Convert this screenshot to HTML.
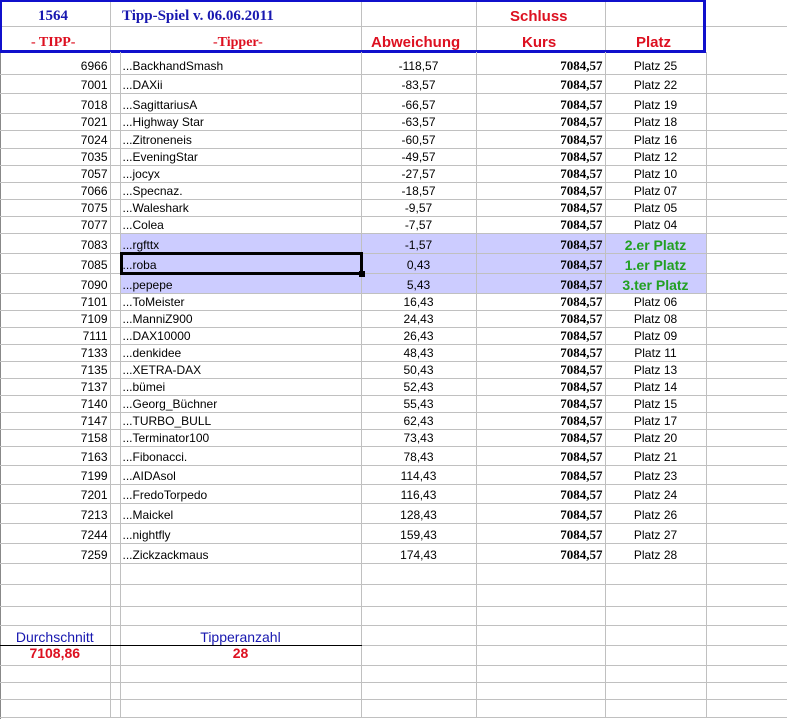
<!DOCTYPE html>
<html><head><meta charset="utf-8"><style>
*{margin:0;padding:0;box-sizing:border-box}
body{width:787px;height:719px;overflow:hidden;background:#fff;position:relative;font-family:"Liberation Sans",Arial,sans-serif;font-size:12px;color:#000}
table{position:absolute;left:0;top:52px;border-collapse:collapse;table-layout:fixed;width:788px}
td{border-right:1px solid #c0c0c0;border-bottom:1px solid #c0c0c0;padding:0 2px 1px 2px;vertical-align:bottom;white-space:nowrap;overflow:visible;line-height:14px}
td.a{text-align:right}
td.c{text-align:left}
td.d{text-align:center}
td.e{text-align:right;font-family:"Liberation Serif",serif;font-weight:bold;font-size:13px}
td.f{text-align:center}
tr.h td.c,tr.h td.d,tr.h td.e,tr.h td.g{background:#ccccff}
td.g{color:#22a022;font-weight:bold;font-size:14px;text-align:center}
.hdr{position:absolute;left:0;top:0;width:706px;height:53px;border:2px solid #1010cc;border-bottom:3px solid #1010cc;border-right:3px solid #1010cc}
.t{position:absolute;white-space:nowrap}
.vl{position:absolute;width:1px;background:#c0c0c0}
.hl{position:absolute;height:1px;background:#c0c0c0}
</style></head><body>
<div class="vl" style="left:0;top:0;height:719px;background:#888"></div>
<div class="vl" style="left:110px;top:0;height:52px"></div>
<div class="vl" style="left:361px;top:0;height:52px"></div>
<div class="vl" style="left:476px;top:0;height:52px"></div>
<div class="vl" style="left:605px;top:0;height:52px"></div>
<div class="hl" style="left:0;top:26px;width:706px"></div>
<div class="hl" style="left:706px;top:26px;width:81px"></div>
<div class="hdr"></div>
<div class="t" style="left:38px;top:8px;font-family:'Liberation Serif',serif;font-weight:bold;font-size:15px;color:#1818b0">1564</div>
<div class="t" style="left:122px;top:8px;font-family:'Liberation Serif',serif;font-weight:bold;font-size:15px;color:#1818b0">Tipp-Spiel v. 06.06.2011</div>
<div class="t" style="left:510px;top:8px;font-weight:bold;font-size:15px;color:#dd1020">Schluss</div>
<div class="t" style="left:31px;top:35px;font-family:'Liberation Serif',serif;font-weight:bold;font-size:14px;color:#dd1020">- TIPP-</div>
<div class="t" style="left:213px;top:35px;font-family:'Liberation Serif',serif;font-weight:bold;font-size:14px;color:#dd1020">-Tipper-</div>
<div class="t" style="left:371px;top:34px;font-weight:bold;font-size:15px;color:#dd1020">Abweichung</div>
<div class="t" style="left:522px;top:34px;font-weight:bold;font-size:15px;color:#dd1020">Kurs</div>
<div class="t" style="left:636px;top:34px;font-weight:bold;font-size:15px;color:#dd1020">Platz</div>
<table>
<colgroup><col style="width:110px"><col style="width:10px"><col style="width:241px"><col style="width:115px"><col style="width:129px"><col style="width:101px"><col style="width:82px"></colgroup>
<tr style="height:22px"><td class="a">6966</td><td></td><td class="c">...BackhandSmash</td><td class="d">-118,57</td><td class="e">7084,57</td><td class="f">Platz 25</td><td></td></tr>
<tr style="height:19px"><td class="a">7001</td><td></td><td class="c">...DAXii</td><td class="d">-83,57</td><td class="e">7084,57</td><td class="f">Platz 22</td><td></td></tr>
<tr style="height:20px"><td class="a">7018</td><td></td><td class="c">...SagittariusA</td><td class="d">-66,57</td><td class="e">7084,57</td><td class="f">Platz 19</td><td></td></tr>
<tr style="height:17px"><td class="a">7021</td><td></td><td class="c">...Highway Star</td><td class="d">-63,57</td><td class="e">7084,57</td><td class="f">Platz 18</td><td></td></tr>
<tr style="height:18px"><td class="a">7024</td><td></td><td class="c">...Zitroneneis</td><td class="d">-60,57</td><td class="e">7084,57</td><td class="f">Platz 16</td><td></td></tr>
<tr style="height:17px"><td class="a">7035</td><td></td><td class="c">...EveningStar</td><td class="d">-49,57</td><td class="e">7084,57</td><td class="f">Platz 12</td><td></td></tr>
<tr style="height:17px"><td class="a">7057</td><td></td><td class="c">...jocyx</td><td class="d">-27,57</td><td class="e">7084,57</td><td class="f">Platz 10</td><td></td></tr>
<tr style="height:17px"><td class="a">7066</td><td></td><td class="c">...Specnaz.</td><td class="d">-18,57</td><td class="e">7084,57</td><td class="f">Platz 07</td><td></td></tr>
<tr style="height:17px"><td class="a">7075</td><td></td><td class="c">...Waleshark</td><td class="d">-9,57</td><td class="e">7084,57</td><td class="f">Platz 05</td><td></td></tr>
<tr style="height:17px"><td class="a">7077</td><td></td><td class="c">...Colea</td><td class="d">-7,57</td><td class="e">7084,57</td><td class="f">Platz 04</td><td></td></tr>
<tr class="h" style="height:20px"><td class="a">7083</td><td></td><td class="c">...rgfttx</td><td class="d">-1,57</td><td class="e">7084,57</td><td class="g">2.er Platz</td><td></td></tr>
<tr class="h" style="height:20px"><td class="a">7085</td><td></td><td class="c">...roba</td><td class="d">0,43</td><td class="e">7084,57</td><td class="g">1.er Platz</td><td></td></tr>
<tr class="h" style="height:20px"><td class="a">7090</td><td></td><td class="c">...pepepe</td><td class="d">5,43</td><td class="e">7084,57</td><td class="g">3.ter Platz</td><td></td></tr>
<tr style="height:17px"><td class="a">7101</td><td></td><td class="c">...ToMeister</td><td class="d">16,43</td><td class="e">7084,57</td><td class="f">Platz 06</td><td></td></tr>
<tr style="height:17px"><td class="a">7109</td><td></td><td class="c">...ManniZ900</td><td class="d">24,43</td><td class="e">7084,57</td><td class="f">Platz 08</td><td></td></tr>
<tr style="height:17px"><td class="a">7111</td><td></td><td class="c">...DAX10000</td><td class="d">26,43</td><td class="e">7084,57</td><td class="f">Platz 09</td><td></td></tr>
<tr style="height:17px"><td class="a">7133</td><td></td><td class="c">...denkidee</td><td class="d">48,43</td><td class="e">7084,57</td><td class="f">Platz 11</td><td></td></tr>
<tr style="height:17px"><td class="a">7135</td><td></td><td class="c">...XETRA-DAX</td><td class="d">50,43</td><td class="e">7084,57</td><td class="f">Platz 13</td><td></td></tr>
<tr style="height:17px"><td class="a">7137</td><td></td><td class="c">...bümei</td><td class="d">52,43</td><td class="e">7084,57</td><td class="f">Platz 14</td><td></td></tr>
<tr style="height:17px"><td class="a">7140</td><td></td><td class="c">...Georg_Büchner</td><td class="d">55,43</td><td class="e">7084,57</td><td class="f">Platz 15</td><td></td></tr>
<tr style="height:17px"><td class="a">7147</td><td></td><td class="c">...TURBO_BULL</td><td class="d">62,43</td><td class="e">7084,57</td><td class="f">Platz 17</td><td></td></tr>
<tr style="height:17px"><td class="a">7158</td><td></td><td class="c">...Terminator100</td><td class="d">73,43</td><td class="e">7084,57</td><td class="f">Platz 20</td><td></td></tr>
<tr style="height:19px"><td class="a">7163</td><td></td><td class="c">...Fibonacci.</td><td class="d">78,43</td><td class="e">7084,57</td><td class="f">Platz 21</td><td></td></tr>
<tr style="height:19px"><td class="a">7199</td><td></td><td class="c">...AIDAsol</td><td class="d">114,43</td><td class="e">7084,57</td><td class="f">Platz 23</td><td></td></tr>
<tr style="height:19px"><td class="a">7201</td><td></td><td class="c">...FredoTorpedo</td><td class="d">116,43</td><td class="e">7084,57</td><td class="f">Platz 24</td><td></td></tr>
<tr style="height:20px"><td class="a">7213</td><td></td><td class="c">...Maickel</td><td class="d">128,43</td><td class="e">7084,57</td><td class="f">Platz 26</td><td></td></tr>
<tr style="height:20px"><td class="a">7244</td><td></td><td class="c">...nightfly</td><td class="d">159,43</td><td class="e">7084,57</td><td class="f">Platz 27</td><td></td></tr>
<tr style="height:20px"><td class="a">7259</td><td></td><td class="c">...Zickzackmaus</td><td class="d">174,43</td><td class="e">7084,57</td><td class="f">Platz 28</td><td></td></tr>
<tr style="height:21px"><td></td><td></td><td></td><td></td><td></td><td></td><td></td></tr>
<tr style="height:22px"><td></td><td></td><td></td><td></td><td></td><td></td><td></td></tr>
<tr style="height:19px"><td></td><td></td><td></td><td></td><td></td><td></td><td></td></tr>
<tr style="height:20px"><td style="text-align:center;color:#1818b0;font-size:14px;border-bottom:1px solid #000">Durchschnitt</td><td style="border-bottom:1px solid #000"></td><td style="text-align:center;color:#1818b0;font-size:14px;border-bottom:1px solid #000">Tipperanzahl</td><td></td><td></td><td></td><td></td></tr>
<tr style="height:20px"><td style="text-align:center;color:#dd1020;font-weight:bold;font-size:14px;vertical-align:top">7108,86</td><td></td><td style="text-align:center;color:#dd1020;font-weight:bold;font-size:14px;vertical-align:top">28</td><td></td><td></td><td></td><td></td></tr>
<tr style="height:17px"><td></td><td></td><td></td><td></td><td></td><td></td><td></td></tr>
<tr style="height:17px"><td></td><td></td><td></td><td></td><td></td><td></td><td></td></tr>
<tr style="height:18px"><td></td><td></td><td></td><td></td><td></td><td></td><td></td></tr>
</table>
<div style="position:absolute;left:120px;top:252px;width:243px;height:23px;border:3px solid #000"></div>
<div style="position:absolute;left:359px;top:271px;width:6px;height:6px;background:#000"></div>
</body></html>
